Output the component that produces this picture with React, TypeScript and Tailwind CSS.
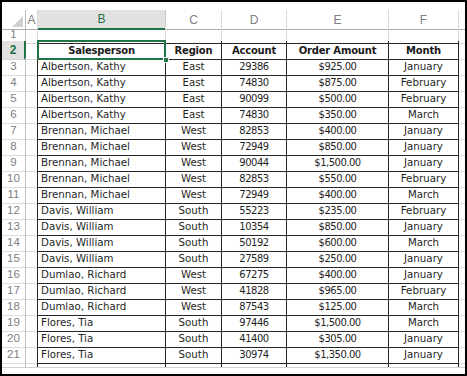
const rows: string[][] = [
  ['Albertson, Kathy', 'East', '29386', '$925.00', 'January'],
  ['Albertson, Kathy', 'East', '74830', '$875.00', 'February'],
  ['Albertson, Kathy', 'East', '90099', '$500.00', 'February'],
  ['Albertson, Kathy', 'East', '74830', '$350.00', 'March'],
  ['Brennan, Michael', 'West', '82853', '$400.00', 'January'],
  ['Brennan, Michael', 'West', '72949', '$850.00', 'January'],
  ['Brennan, Michael', 'West', '90044', '$1,500.00', 'January'],
  ['Brennan, Michael', 'West', '82853', '$550.00', 'February'],
  ['Brennan, Michael', 'West', '72949', '$400.00', 'March'],
  ['Davis, William', 'South', '55223', '$235.00', 'February'],
  ['Davis, William', 'South', '10354', '$850.00', 'January'],
  ['Davis, William', 'South', '50192', '$600.00', 'March'],
  ['Davis, William', 'South', '27589', '$250.00', 'January'],
  ['Dumlao, Richard', 'West', '67275', '$400.00', 'January'],
  ['Dumlao, Richard', 'West', '41828', '$965.00', 'February'],
  ['Dumlao, Richard', 'West', '87543', '$125.00', 'March'],
  ['Flores, Tia', 'South', '97446', '$1,500.00', 'March'],
  ['Flores, Tia', 'South', '41400', '$305.00', 'January'],
  ['Flores, Tia', 'South', '30974', '$1,350.00', 'January'],
];

const grid = 'grid grid-cols-[24px_12px_128px_56px_65px_102px_70px_6px]';
const cellFont = "font-['DejaVu_Sans',sans-serif]";
const headFont = "font-['Liberation_Sans',Arial,sans-serif]";

const RowNum = ({ n, active }: { n: number | string; active?: boolean }) => (
  <div
    className={
      active
        ? `flex items-center justify-center bg-[#e1e1e1] border-r-2 border-r-[#217346] border-b border-b-[#d4d4d4] text-[#217346] text-[12px] ${headFont}`
        : `flex items-center justify-center border-r border-r-[#bdbdbd] border-b border-b-[#dcdcdc] text-[#808080] text-[11.5px] ${headFont}`
    }
  >
    {n}
  </div>
);

export default function App() {
  return (
    <div className="w-[467px] h-[376px] bg-white border-2 border-black overflow-hidden flex flex-col">
      <div className="h-[8px] shrink-0" />

      {/* column letters */}
      <div className={`${grid} h-[16px] shrink-0 text-[12px] text-[#808080] ${headFont}`}>
        <div className="relative border-r border-r-[#bdbdbd] border-b border-b-[#ababab]">
          <svg className="absolute right-[2px] bottom-[2px]" width="11" height="11" viewBox="0 0 11 11">
            <polygon points="11,0 11,11 0,11" fill="#d0d0d0" />
          </svg>
        </div>
        <div className="flex items-center justify-center border-r border-r-[#dadada] border-b border-b-[#ababab]">A</div>
        <div className="flex items-center justify-center bg-[#e1e1e1] border-r border-r-[#c8c8c8] border-b-2 border-b-[#217346] text-[#217346]">B</div>
        <div className="flex items-center justify-center border-r border-r-[#dadada] border-b border-b-[#ababab]">C</div>
        <div className="flex items-center justify-center border-r border-r-[#dadada] border-b border-b-[#ababab]">D</div>
        <div className="flex items-center justify-center border-r border-r-[#dadada] border-b border-b-[#ababab]">E</div>
        <div className="flex items-center justify-center border-r border-r-[#dadada] border-b border-b-[#ababab]">F</div>
        <div className="border-b border-b-[#ababab]" />
      </div>

      {/* row 1 */}
      <div className={`${grid} h-[15px] shrink-0`}>
        <RowNum n={1} />
        <div className="border-r border-r-[#dadada] border-b border-b-[#dadada]" />
        <div className="border-r border-r-[#dadada] border-b border-b-[#262626]" />
        <div className="border-r border-r-[#dadada] border-b border-b-[#262626]" />
        <div className="border-r border-r-[#dadada] border-b border-b-[#262626]" />
        <div className="border-r border-r-[#dadada] border-b border-b-[#262626]" />
        <div className="border-r border-r-[#dadada] border-b border-b-[#262626]" />
        <div className="border-b border-b-[#dadada]" />
      </div>

      {/* row 2 header */}
      <div className={`${grid} h-[17px] shrink-0 text-[10px] font-bold tracking-[-0.2px] text-[#1a1a1a] ${cellFont}`}>
        <RowNum n={2} active />
        <div className="border-r border-r-[#262626] border-b border-b-[#dadada]" />
        <div className="relative flex items-center justify-center border-r border-r-[#262626] border-b border-b-[#262626]">
          Salesperson
          <div className="absolute -left-px -top-px -right-px -bottom-px border-2 border-[#217346]" />
          <div className="absolute -right-[4px] -bottom-[4px] w-[6px] h-[6px] bg-[#217346] border border-white" />
        </div>
        <div className="flex items-center justify-center border-r border-r-[#262626] border-b border-b-[#262626]">Region</div>
        <div className="flex items-center justify-center border-r border-r-[#262626] border-b border-b-[#262626]">Account</div>
        <div className="flex items-center justify-center border-r border-r-[#262626] border-b border-b-[#262626]">Order Amount</div>
        <div className="flex items-center justify-center border-r border-r-[#262626] border-b border-b-[#262626]">Month</div>
        <div className="border-b border-b-[#dadada]" />
      </div>

      {/* data rows */}
      {rows.map((r, i) => (
        <div key={i} className={`${grid} h-[16px] shrink-0 text-[#1f1f1f] ${cellFont}`}>
          <RowNum n={i + 3} />
          <div className="border-r border-r-[#262626] border-b border-b-[#dadada]" />
          <div className="flex items-center pl-[3px] text-[10.25px] border-r border-r-[#262626] border-b border-b-[#262626] whitespace-nowrap">{r[0]}</div>
          <div className="flex items-center justify-center text-[10.25px] border-r border-r-[#262626] border-b border-b-[#262626]">{r[1]}</div>
          <div className="flex items-center justify-center text-[10px] tracking-[-0.5px] border-r border-r-[#262626] border-b border-b-[#262626]">{r[2]}</div>
          <div className="flex items-center justify-center text-[10px] tracking-[-0.5px] border-r border-r-[#262626] border-b border-b-[#262626]">{r[3]}</div>
          <div className="flex items-center justify-center text-[10.25px] border-r border-r-[#262626] border-b border-b-[#262626]">{r[4]}</div>
          <div className="border-b border-b-[#dadada]" />
        </div>
      ))}

      {/* row 22, cut off */}
      <div className={`${grid} h-[5px] shrink-0`}>
        <div className="border-r border-r-[#bdbdbd]" />
        <div className="border-r border-r-[#262626]" />
        <div className="border-r border-r-[#262626]" />
        <div className="border-r border-r-[#262626]" />
        <div className="border-r border-r-[#262626]" />
        <div className="border-r border-r-[#262626]" />
        <div className="border-r border-r-[#262626]" />
        <div />
      </div>

      <div className="flex-1 border-t border-t-[#cfcfcf] bg-white" />
    </div>
  );
}
